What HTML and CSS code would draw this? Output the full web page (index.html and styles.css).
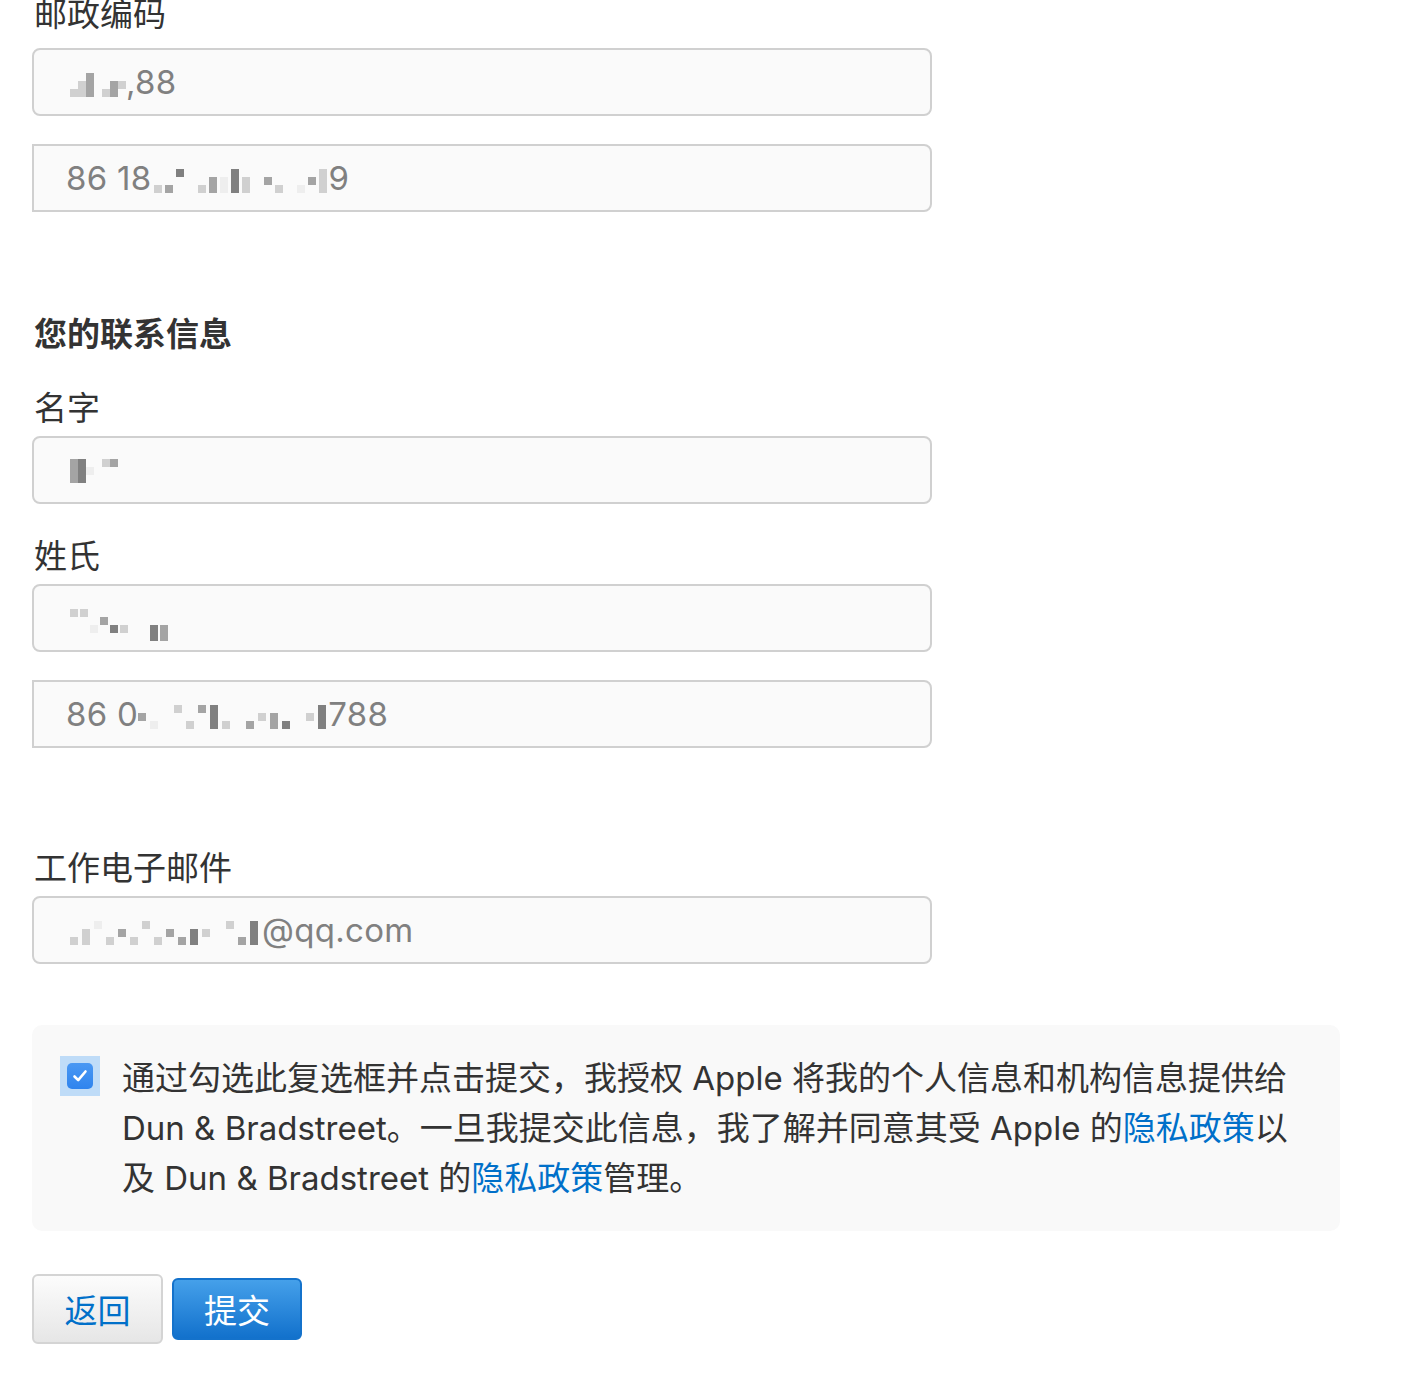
FILE: index.html
```html
<!DOCTYPE html>
<html lang="zh-CN">
<head>
<meta charset="utf-8">
<title>联系信息</title>
<link rel="stylesheet" href="styles.css">
</head>
<body>
<main class="page">
  <section class="group group-address">
    <label class="label label-first">邮政编码</label>
    <div class="input"><span class="mosaic m-postal"><i class="c l1"></i><i class="c l1 up"></i><i class="c d1 tall"></i><i class="gap"></i><i class="c l1"></i><i class="c d1 up"></i><i class="c l1 mid"></i></span><span class="val">,88</span></div>
    <div class="input phone"><span class="val">86 18</span><span class="mosaic m-phone1"><i class="c l1"></i><i class="c d1"></i><i class="c d2 dot"></i><i class="gap"></i><i class="c l1"></i><i class="c d1 up"></i><i class="c l0 up"></i><i class="c d2 tall"></i><i class="c l1 up"></i><i class="gap"></i><i class="c d1 mid"></i><i class="c l1"></i><i class="gap"></i><i class="c l0"></i><i class="c d1 mid"></i><i class="c l1 tall"></i></span><span class="val">9</span></div>
  </section>

  <h2 class="heading">您的联系信息</h2>

  <section class="group">
    <label class="label">名字</label>
    <div class="input"><span class="mosaic m-first"><i class="c d1 tall"></i><i class="c d2 tall"></i><i class="c l0 mid"></i><i class="gap"></i><i class="c l1 dot"></i><i class="c d1 dot"></i></span></div>
  </section>

  <section class="group">
    <label class="label">姓氏</label>
    <div class="input"><span class="mosaic m-last"><i class="c l1 dot"></i><i class="c l1 dot"></i><i class="c l0"></i><i class="c d1 mid"></i><i class="c d2"></i><i class="c l1"></i><i class="gap"></i><i class="gap"></i><i class="c d2 low"></i><i class="c d1 low"></i></span></div>
    <div class="input phone"><span class="val">86 0</span><span class="mosaic m-phone2"><i class="c d1 mid"></i><i class="c l0"></i><i class="gap"></i><i class="c l1 dot"></i><i class="c l1"></i><i class="c d1 dot"></i><i class="c d2 tall"></i><i class="c l1"></i><i class="gap"></i><i class="c d1"></i><i class="c l1 mid"></i><i class="c d1 up"></i><i class="c d2"></i><i class="gap"></i><i class="c l1 mid"></i><i class="c d2 tall"></i></span><span class="val">788</span></div>
  </section>

  <section class="group group-email">
    <label class="label">工作电子邮件</label>
    <div class="input"><span class="mosaic m-email"><i class="c l1"></i><i class="c l1 up"></i><i class="c l0 dot"></i><i class="c l1"></i><i class="c d1 mid"></i><i class="c l1"></i><i class="c l1 dot"></i><i class="c l1"></i><i class="c d1 mid"></i><i class="c d1"></i><i class="c d2 up"></i><i class="c l1 mid"></i><i class="gap"></i><i class="c l1 dot"></i><i class="c d1"></i><i class="c d2 tall"></i></span><span class="val">@qq.com</span></div>
  </section>

  <section class="consent">
    <span class="check-ring"><span class="check-box"><svg viewBox="0 0 26 26" width="26" height="26"><path d="M7.5 13.5 L11.2 17.2 L18.5 8.5" fill="none" stroke="#fff" stroke-width="2.6" stroke-linecap="round" stroke-linejoin="round"/></svg></span></span>
    <p class="consent-text">通过勾选此复选框并点击提交，我授权 Apple 将我的个人信息和机构信息提供给 Dun &amp; Bradstreet。一旦我提交此信息，我了解并同意其受 Apple 的<a href="#">隐私政策</a>以及 Dun &amp; Bradstreet 的<a href="#">隐私政策</a>管理。</p>
  </section>

  <div class="actions">
    <button class="btn btn-back" type="button">返回</button>
    <button class="btn btn-submit" type="button">提交</button>
  </div>
</main>
</body>
</html>
```

FILE: styles.css
```css
html, body {
  margin: 0;
  padding: 0;
  background: #ffffff;
}

body {
  font-family: Inter, "Noto Sans CJK SC", "Noto Sans", sans-serif;
  color: #333333;
  overflow: hidden;
}

.page {
  padding: 0 32px 0 32px;
  width: 1308px;
}

.group {
  display: flex;
  flex-direction: column;
  width: 900px;
}

.label {
  display: block;
  font-size: 33px;
  line-height: 40px;
  height: 40px;
  margin-bottom: 8px;
  padding-left: 2px;
  color: #333;
}

.label-first {
  margin-top: -6px;
  margin-bottom: 14px;
}

.input {
  box-sizing: border-box;
  height: 68px;
  width: 900px;
  border: 2px solid #d0d0d0;
  border-radius: 8px;
  background: #fafafa;
  display: flex;
  align-items: center;
  padding-left: 32px;
  font-size: 33px;
  color: #808080;
}

.input + .input {
  margin-top: 28px;
}

.input.phone {
  border-radius: 0 8px 8px 0;
}

.val {
  line-height: 1;
  letter-spacing: 0.3px;
}

.group + .group {
  margin-top: 32px;
}

.heading {
  font-size: 33px;
  font-weight: 700;
  line-height: 44px;
  margin: 100px 0 32px 2px;
  color: #333;
}

.group-email {
  margin-top: 100px !important;
}

/* pixelated blur */
.mosaic {
  display: inline-flex;
  align-items: flex-end;
  height: 26px;
  margin-top: 4px;
}

.mosaic .c {
  display: block;
  width: 8px;
  height: 8px;
}

.mosaic .c.mid { height: 8px; margin-bottom: 8px; }
.mosaic .c.up { height: 16px; }
.mosaic .c.tall { height: 24px; }
.mosaic .c.low { height: 16px; margin-bottom: -8px; }
.mosaic .c.dot { height: 8px; margin-bottom: 16px; }
.mosaic .gap { display: block; width: 8px; }

.mosaic .l0 { background: #eeeeee; }
.mosaic .l1 { background: #d0d0d0; }
.mosaic .d1 { background: #a4a4a4; }
.mosaic .d2 { background: #808080; }

.m-postal { margin-left: 4px; gap: 0; }
.m-phone1 { margin-left: 2px; margin-right: 2px; gap: 3px; }
.m-phone2 { margin-left: 0; margin-right: 2px; gap: 4px; }
.m-first { margin-left: 4px; gap: 0; margin-top: 0; }
.m-last { margin-left: 4px; gap: 2px; }
.m-email { margin-left: 4px; gap: 4px; margin-right: 4px; }

/* consent */
.consent {
  margin-top: 61px;
  box-sizing: border-box;
  width: 1308px;
  background: #f9f9f9;
  border-radius: 10px;
  padding: 28px 28px 28px 28px;
  display: flex;
  align-items: flex-start;
  gap: 22px;
}

.check-ring {
  flex: none;
  width: 40px;
  height: 40px;
  margin-top: 3px;
  background: #bfdcf8;
  display: flex;
  align-items: center;
  justify-content: center;
}

.check-box {
  width: 26px;
  height: 26px;
  border-radius: 5px;
  background: linear-gradient(#4a98f3, #2f84ee);
  display: flex;
}

.consent-text {
  margin: 0;
  font-size: 33px;
  line-height: 50px;
  color: #333;
  flex: 1;
}

.consent-text a {
  color: #0070c9;
  text-decoration: none;
}

/* buttons */
.actions {
  margin-top: 43px;
  display: flex;
  align-items: center;
  gap: 9px;
}

.btn {
  font-family: inherit;
  font-size: 33px;
  box-sizing: border-box;
  width: 131px;
  border-radius: 6px;
  cursor: pointer;
  padding: 0;
}

.btn-back {
  height: 70px;
  border: 2px solid #d4d4d4;
  background: linear-gradient(#fcfcfc, #e6e6e6);
  color: #0070c9;
}

.btn-submit {
  height: 62px;
  width: 130px;
  border: 2px solid #1472cb;
  background: linear-gradient(#45a0ea, #1271cc);
  color: #ffffff;
}
```
